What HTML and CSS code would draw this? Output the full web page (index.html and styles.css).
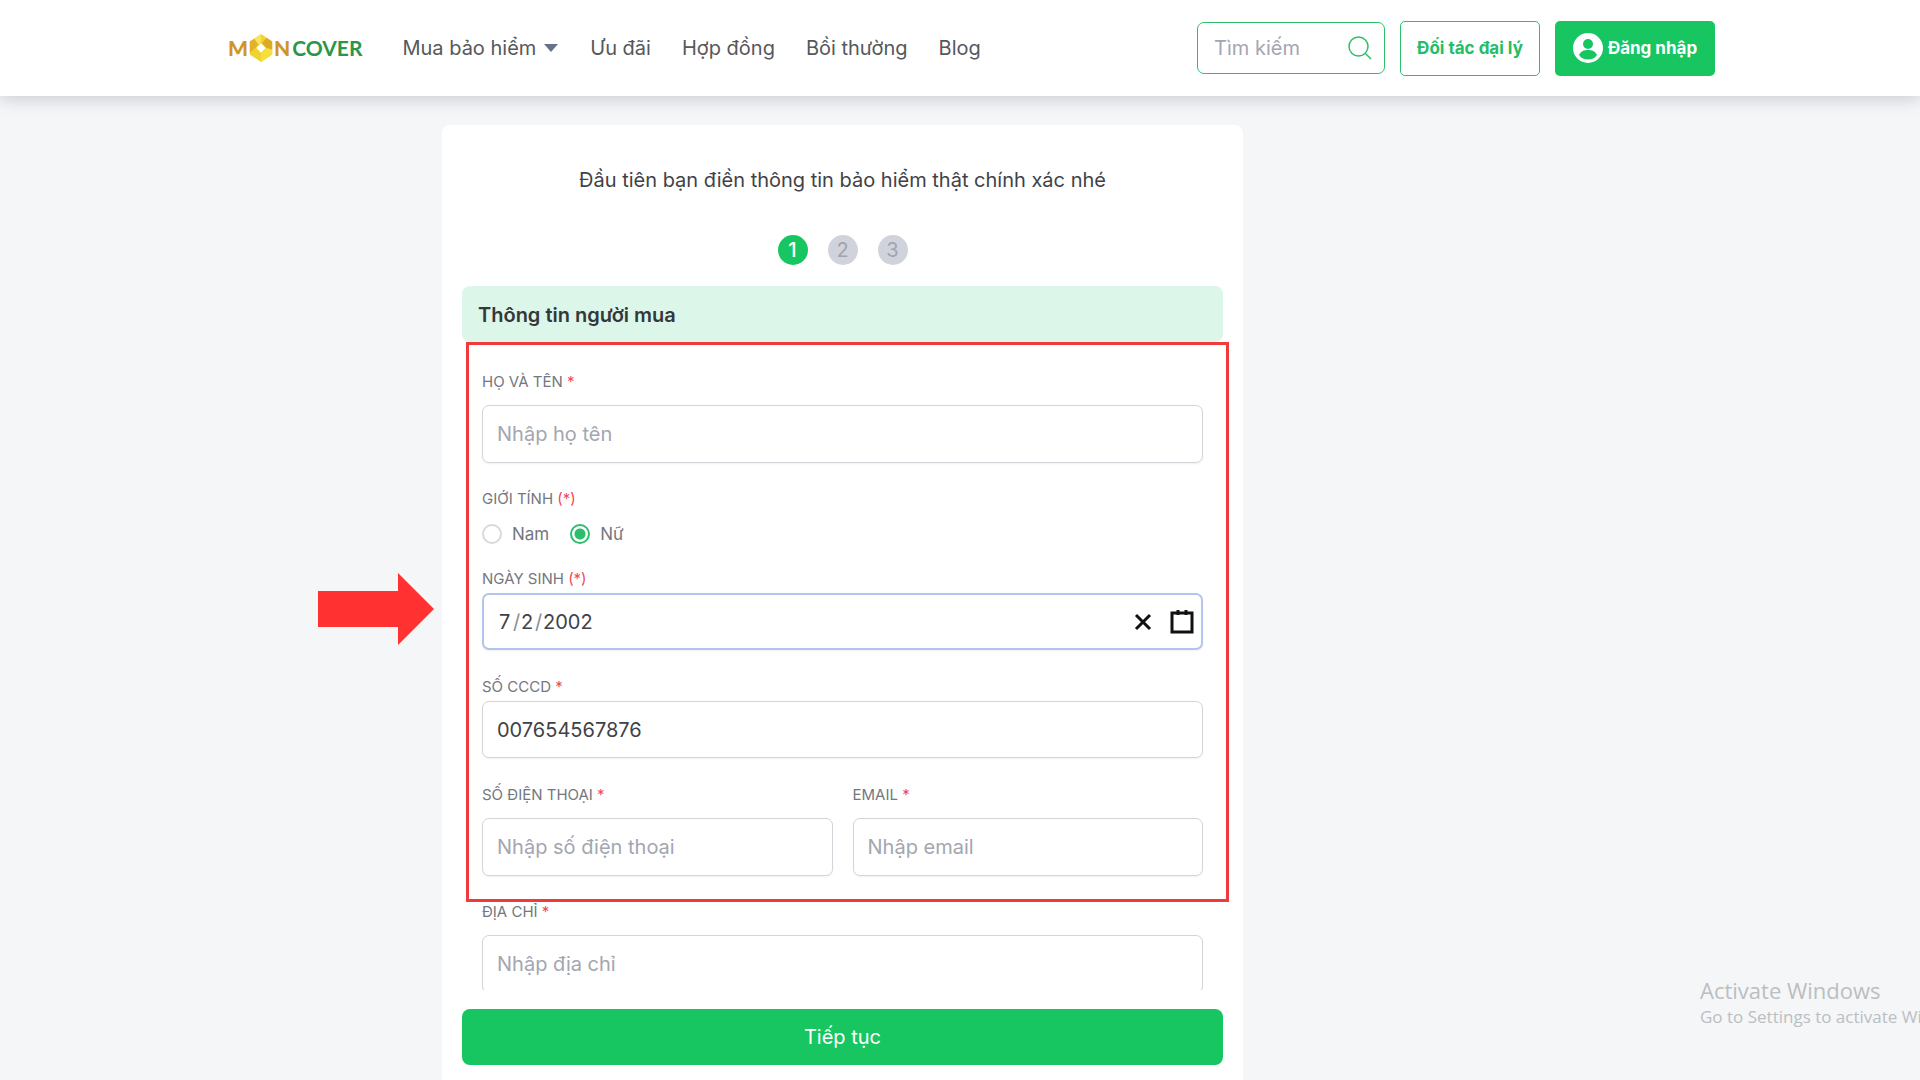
FILE: index.html
```html
<!DOCTYPE html>
<html lang="vi">
<head>
<meta charset="utf-8">
<meta name="viewport" content="width=device-width, initial-scale=1">
<title>Moncover</title>
<link rel="stylesheet" href="styles.css">
</head>
<body>
<header class="header">
  <a class="logo" href="#" aria-label="Moncover">
    <span class="logo-gold">M</span>
    <svg class="logo-mark" viewBox="0 0 24 30" aria-hidden="true">
      <path fill="#f0d32f" d="M12 0 24 8v14l-12 8L0 22V8z"/>
      <path fill="#e0b22a" d="M0 8 5 5l4 6-3 4-6 5z"/>
      <path fill="#f7e45c" d="M12 0 5 5l4 6 3-2z"/>
      <path fill="#dcab26" d="M24 8v9l-6-2-5-5 5-6z"/>
      <path fill="#f5df3c" d="M24 17v5l-12 8v-9l6-6z"/>
      <path fill="#fff" d="m12 10 5 5-5 5-5-5z"/>
    </svg>
    <span class="logo-gold">N</span><span class="logo-green">COVER</span>
  </a>
  <nav class="nav">
    <a href="#">Mua bảo hiểm <svg class="caret" viewBox="0 0 14 8" aria-hidden="true"><path d="M0 0h14L7 8z"/></svg></a>
    <a href="#">Ưu đãi</a>
    <a href="#">Hợp đồng</a>
    <a href="#">Bồi thường</a>
    <a href="#">Blog</a>
  </nav>
  <div class="actions">
    <form class="search">
      <input type="search" placeholder="Tìm kiếm" aria-label="Tìm kiếm">
      <button type="button" aria-label="Tìm">
        <svg viewBox="0 0 24 24" aria-hidden="true"><circle cx="10.500" cy="10.500" r="9.500"/><path d="m17.500 17.500 5.500 5.500"/></svg>
      </button>
    </form>
    <button class="btn btn-outline" type="button">Đối tác đại lý</button>
    <button class="btn btn-solid" type="button">
      <svg viewBox="0 0 30 30" aria-hidden="true"><circle cx="15" cy="15" r="15" fill="#fff"/><circle cx="15" cy="11" r="5" fill="#17c661"/><path fill="#17c661" d="M6 22c2-4 5-5 9-5s7 1 9 5c-2 3-5 4.500-9 4.500S8 25 6 22z"/></svg>
      Đăng nhập
    </button>
  </div>
</header>

<main class="main">
  <section class="card">
    <svg class="arrow" viewBox="0 0 116 72" aria-hidden="true"><path d="M0 18h80V0l36 36-36 36V54H0z"/></svg>
    <h1 class="intro">Đầu tiên bạn điền thông tin bảo hiểm thật chính xác nhé</h1>
    <ol class="steps">
      <li class="current">1</li>
      <li>2</li>
      <li>3</li>
    </ol>
    <h2 class="section-title">Thông tin người mua</h2>
    <div class="form-wrap">
      <form class="form" id="buyer">
        <div class="field">
          <label for="name">HỌ VÀ TÊN <span class="req">*</span></label>
          <input class="box" id="name" type="text" placeholder="Nhập họ tên">
        </div>
        <fieldset class="gender">
          <legend>GIỚI TÍNH <span class="req">(*)</span></legend>
          <div class="radios">
            <label><input type="radio" name="gender"> Nam</label>
            <label><input type="radio" name="gender" checked> Nữ</label>
          </div>
        </fieldset>
        <div class="field tight">
          <label for="day">NGÀY SINH <span class="req">(*)</span></label>
          <div class="box date">
            <input id="day" class="short" type="text" value="7" aria-label="Ngày"><span>/</span><input class="short" type="text" value="2" aria-label="Tháng"><span>/</span><input class="year" type="text" value="2002" aria-label="Năm">
            <button class="clear" type="button" aria-label="Xóa ngày"><svg viewBox="0 0 24 24" aria-hidden="true"><path d="m5 5 14 14M19 5 5 19"/></svg></button>
            <button type="button" aria-label="Mở lịch"><svg viewBox="0 0 24 24" aria-hidden="true"><path d="M2 3h20v19H2zM8 0v5M16 0v5"/></svg></button>
          </div>
        </div>
        <div class="field tight">
          <label for="cccd">SỐ CCCD <span class="req">*</span></label>
          <input class="box" id="cccd" type="text" value="007654567876">
        </div>
        <div class="row">
          <div class="field">
            <label for="phone">SỐ ĐIỆN THOẠI <span class="req">*</span></label>
            <input class="box" id="phone" type="tel" placeholder="Nhập số điện thoại">
          </div>
          <div class="field">
            <label for="email">EMAIL <span class="req">*</span></label>
            <input class="box" id="email" type="email" placeholder="Nhập email">
          </div>
        </div>
        <div class="field">
          <label for="address">ĐỊA CHỈ <span class="req">*</span></label>
          <input class="box" id="address" type="text" placeholder="Nhập địa chỉ">
        </div>
      </form>
      <div class="highlight"></div>
    </div>
    <button class="submit" type="submit" form="buyer">Tiếp tục</button>
  </section>
</main>

<aside class="watermark">
  <p class="wm-title">Activate Windows</p>
  <p>Go to Settings to activate Windows.</p>
</aside>
</body>
</html>
```
FILE: styles.css
```css
* {
  box-sizing: border-box;
}

body {
  margin: 0;
  height: 100vh;
  display: flex;
  flex-direction: column;
  overflow: hidden;
  background: #f4f6f8;
  color: #3f4248;
  font: 20px/30px Inter, "Noto Sans", sans-serif;
}

h1, h2, p, ol, fieldset {
  margin: 0;
  padding: 0;
  border: 0;
}

input, button {
  font: inherit;
  color: inherit;
}

input::placeholder {
  color: #a3a6b0;
  opacity: 1;
}

button {
  padding: 0;
  border: 0;
  background: none;
  cursor: pointer;
}

a {
  color: inherit;
  text-decoration: none;
}

svg {
  display: block;
}

/* Header */

.header {
  position: relative;
  flex: none;
  display: flex;
  align-items: center;
  height: 96px;
  padding: 0 205px 0 228px;
  background: #fff;
  box-shadow: 0 3px 16px rgba(30, 35, 50, 0.2);
}

.logo {
  display: flex;
  align-items: center;
  font: 900 21px/30px Lato, sans-serif;
}

.logo-gold {
  color: #cf9526;
}

.logo-green {
  margin-left: 2px;
  color: #2b9648;
  font-weight: 700;
}

.logo-mark {
  width: 24px;
  height: 28px;
  margin: 0 1px;
}

.nav {
  display: flex;
  gap: 31px;
  margin-left: 40px;
  white-space: nowrap;
  color: #55585c;
}

.nav a {
  display: flex;
  align-items: center;
}

.caret {
  width: 14px;
  height: 8px;
  margin: 0 1px 0 8px;
  fill: #66728a;
}

.actions {
  display: flex;
  align-items: center;
  gap: 15px;
  margin-left: auto;
}

.search {
  display: flex;
  align-items: center;
  width: 188px;
  height: 52px;
  padding: 0 12px 0 16px;
  border: 1px solid #2fbf6c;
  border-radius: 7px;
}

.search input {
  flex: 1;
  min-width: 0;
  padding: 0;
  border: 0;
  outline: 0;
  background: none;
}

.search svg {
  width: 24px;
  height: 24px;
  fill: none;
  stroke: #2fbf6c;
  stroke-width: 1.5;
}

.btn {
  display: flex;
  align-items: center;
  justify-content: center;
  gap: 5px;
  height: 55px;
  border-radius: 5px;
  font-size: 17px;
  font-weight: 700;
  white-space: nowrap;
}

.btn-outline {
  width: 140px;
  border: 1px solid #2fbf6c;
  color: #25bd66;
}

.btn-solid {
  width: 160px;
  background: #17c661;
  color: #fff;
}

.btn-solid svg {
  width: 30px;
  height: 30px;
}

/* Card */

.main {
  flex: 1;
  min-height: 0;
  display: flex;
  padding: 29px 0 0 442px;
}

.card {
  position: relative;
  display: flex;
  flex-direction: column;
  width: 801px;
  padding: 40px 20px 15px;
  border-radius: 8px 8px 0 0;
  background: #fff;
}

.arrow {
  position: absolute;
  top: 448px;
  left: -124px;
  width: 116px;
  height: 72px;
  fill: #ff3131;
}

.intro {
  font-size: 20px;
  font-weight: 400;
  text-align: center;
}

.steps {
  display: flex;
  justify-content: center;
  gap: 20px;
  margin: 40px 0 21px;
  list-style: none;
}

.steps li {
  width: 30px;
  height: 30px;
  border-radius: 50%;
  background: #d1d3dc;
  color: #a0a4ae;
  text-align: center;
}

.steps .current {
  background: #17c661;
  color: #fff;
  font-weight: 500;
}

.section-title {
  padding: 14px 16px 12px;
  border-radius: 8px;
  background: #ddf6ea;
  color: #33383b;
  font-size: 20px;
  font-weight: 600;
}

/* Form */

.form-wrap {
  position: relative;
  flex: 1;
  min-height: 0;
  margin-bottom: 19px;
}

.form {
  height: 100%;
  padding: 30px 20px 0;
  overflow: hidden;
}

.field {
  display: flex;
  flex-direction: column;
  gap: 13px;
  margin-bottom: 26px;
}

.field.tight {
  gap: 4px;
  margin-bottom: 27px;
}

.field > label,
.gender legend {
  padding: 0;
  color: #74777e;
  font-size: 15px;
  line-height: 20px;
}

.field .req,
.gender .req {
  color: #f0475a;
}

.box {
  width: 100%;
  height: 58px;
  padding: 0 14px;
  border: 1px solid #d3d5da;
  border-radius: 7px;
  background: #fff;
  outline: 0;
  box-shadow: 0 1px 2px rgba(0, 0, 0, 0.06);
}

.tight .box {
  height: 57px;
}

.gender {
  margin-bottom: 22px;
}

.radios {
  display: flex;
  gap: 21px;
  padding-top: 12px;
}

.radios label {
  display: flex;
  align-items: center;
  gap: 10px;
  color: #74777e;
  font-size: 17px;
  line-height: 26px;
}

.radios input {
  appearance: none;
  width: 20px;
  height: 20px;
  margin: 0;
  border: 2px solid #d9d9d9;
  border-radius: 50%;
}

.radios input:checked {
  border-color: #2dbe6c;
  background: radial-gradient(circle, #2dbe6c 5px, #fff 6px);
}

.date {
  display: flex;
  align-items: center;
  padding: 0 7px 0 15px;
  border: 2px solid #b3c5ef;
}

.date input {
  padding: 0;
  border: 0;
  outline: 0;
  background: none;
}

.date .short {
  width: 14px;
}

.date .year {
  width: 60px;
}

.date span {
  width: 8px;
  color: #8b8e94;
}

.date svg {
  width: 24px;
  height: 24px;
  fill: none;
  stroke: #111;
  stroke-width: 3;
}

.date .clear {
  margin: 0 15px 0 auto;
}

.row {
  display: grid;
  grid-template-columns: 1fr 1fr;
  gap: 20px;
}

.highlight {
  position: absolute;
  inset: 0 -6px 88px 4px;
  border: 3px solid #ef3b3b;
  pointer-events: none;
}

.submit {
  flex: none;
  height: 56px;
  border-radius: 8px;
  background: #17c661;
  color: #fff;
}

/* Desktop watermark */

.watermark {
  position: absolute;
  top: 975px;
  left: 1700px;
  right: 0;
  overflow: hidden;
  color: #bcbec1;
  font: 17px/24px "Open Sans", "Noto Sans", sans-serif;
  white-space: nowrap;
}

.wm-title {
  font-size: 22px;
  line-height: 30px;
}
```
